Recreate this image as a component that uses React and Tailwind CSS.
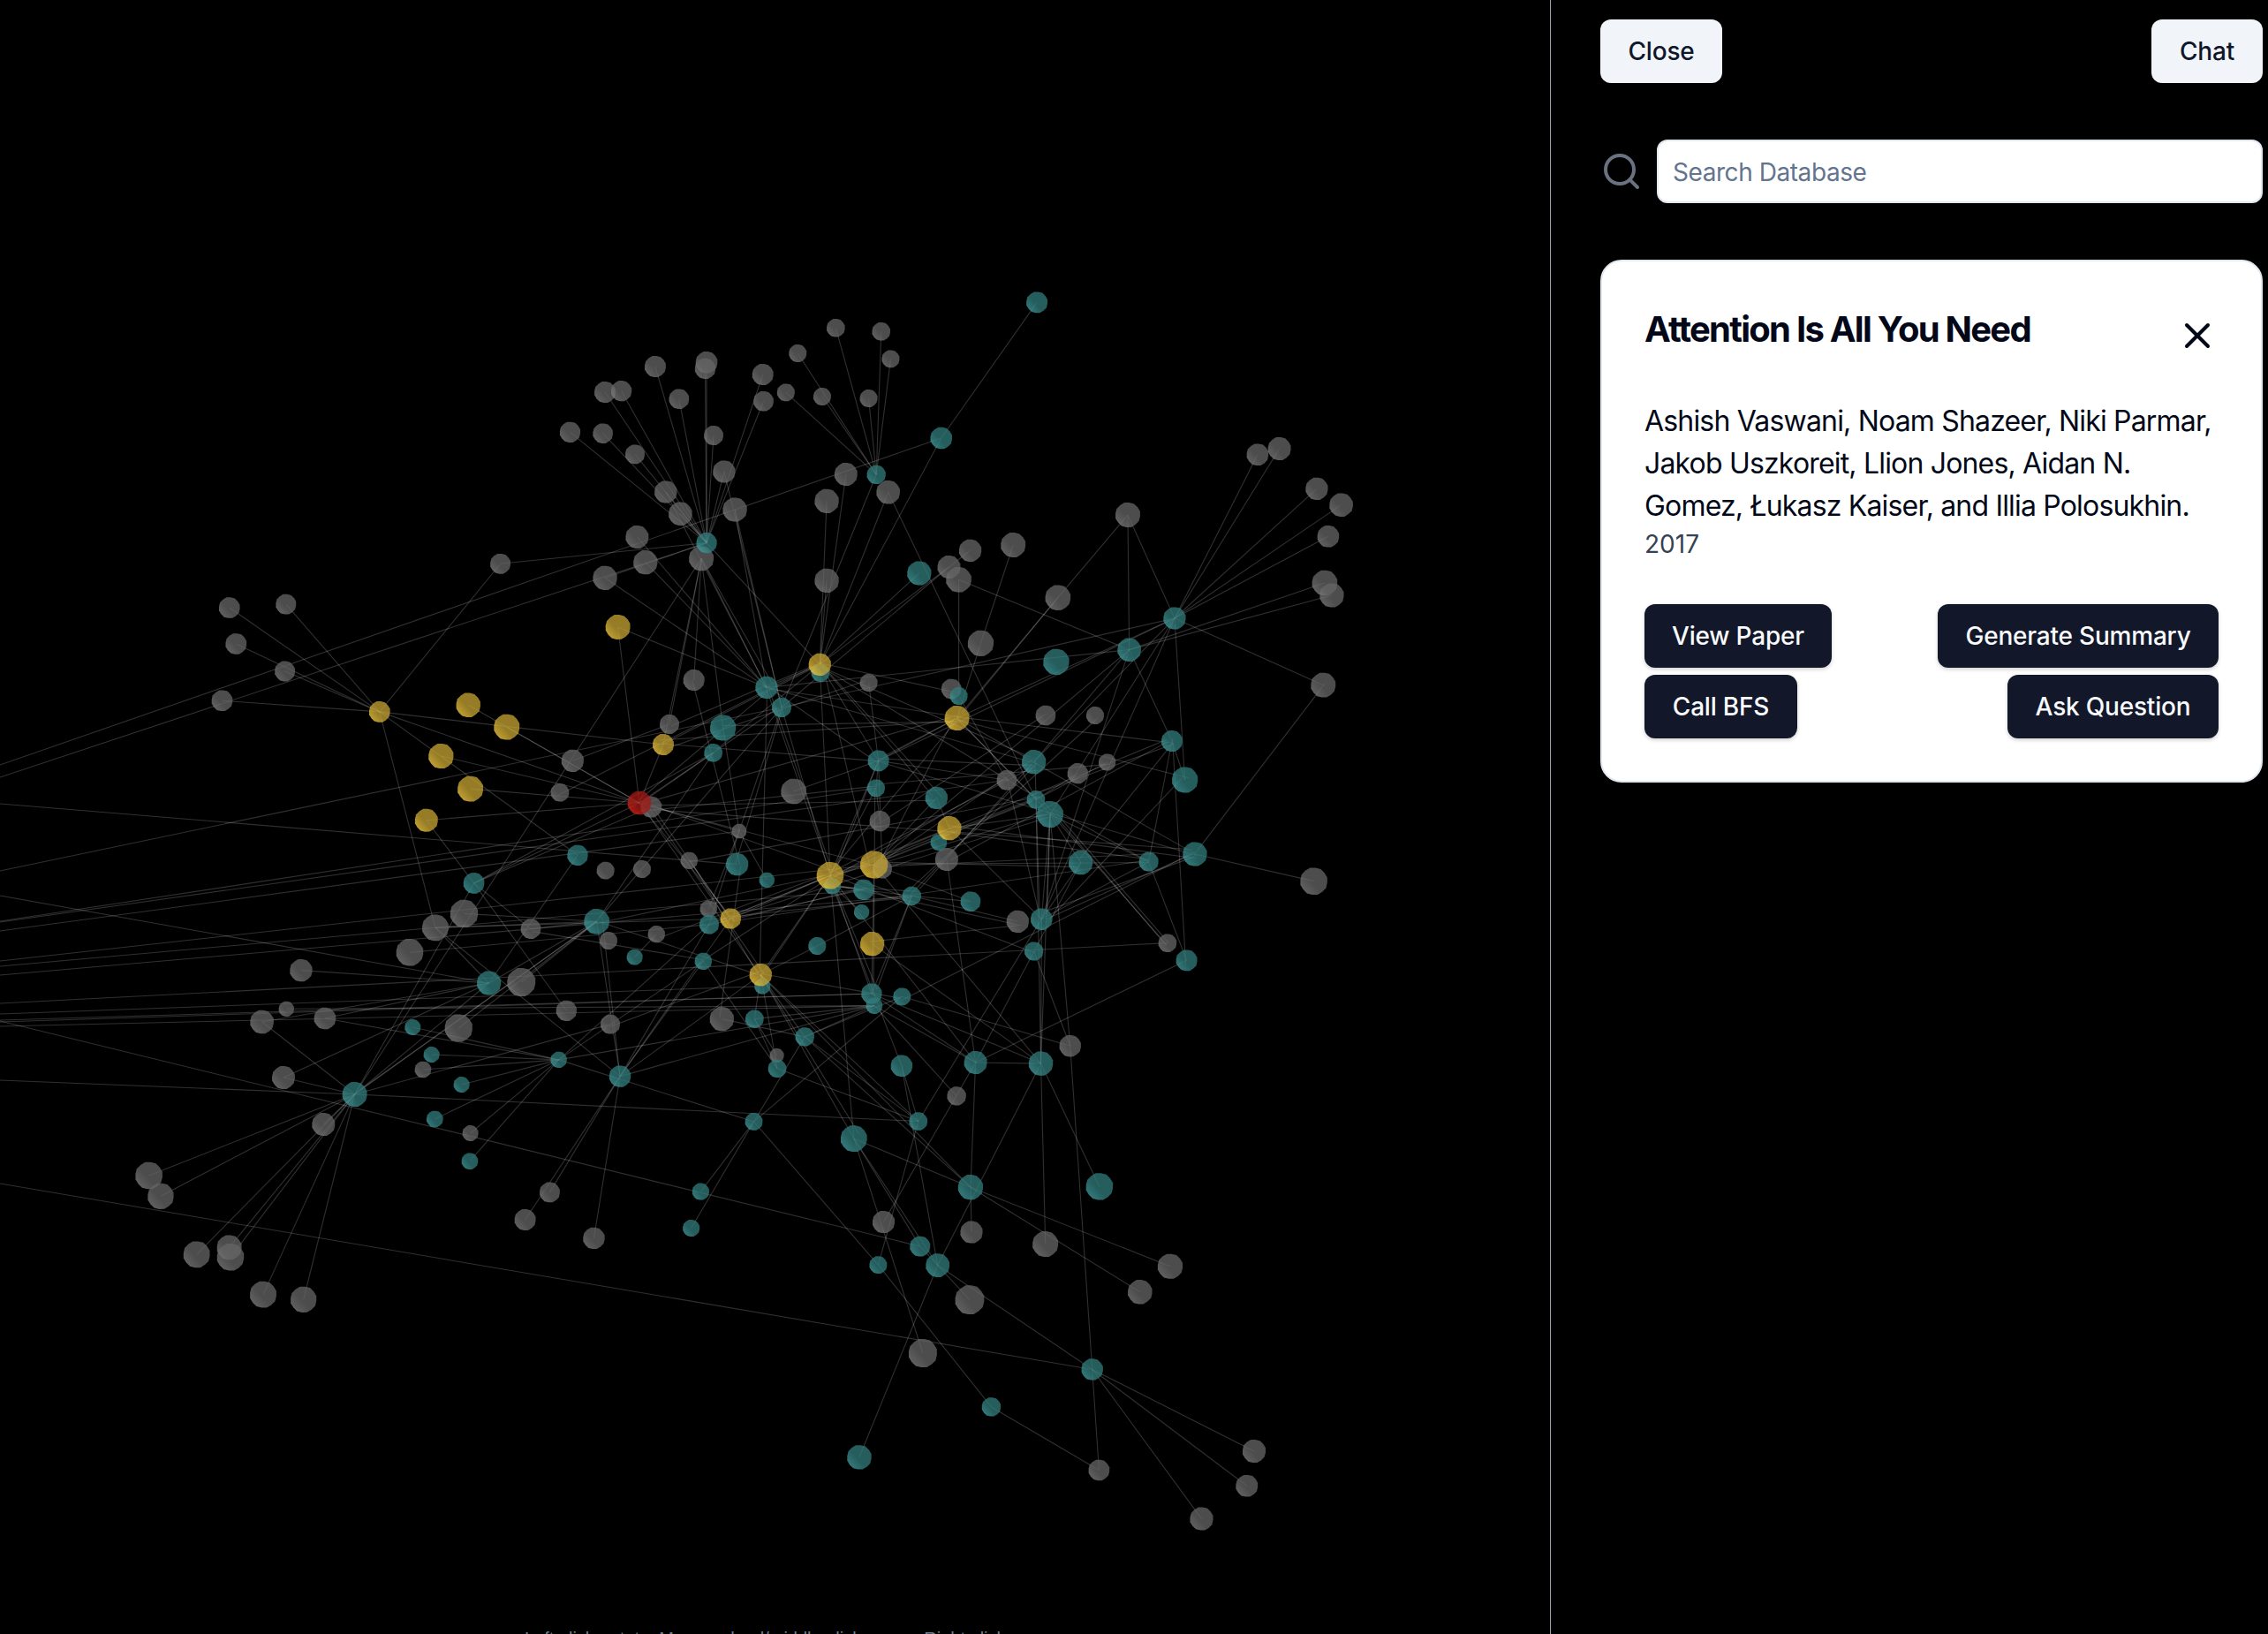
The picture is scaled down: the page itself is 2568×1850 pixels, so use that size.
import React from "react";
import { Search, X } from "lucide-react";

// Node regions: origin (x, y), scale (x, y) and rows of [x, y, radius, kind].
// A radius of 0 is a bare anchor for links.
const REGIONS = {
  a: {
    at: [600, 330], scale: [0.3954, 0.3333],
    nodes: [
      [1452, 37, 36, "t"], [876, 124, 31, "g"], [1006, 136, 31, "g"], [767, 210, 30, "g"], [1033, 229, 30, "g"],
      [359, 255, 36, "g"], [506, 241, 37, "g"], [502, 262, 35, "g"], [667, 282, 36, "g"], [669, 373, 34, "g"],
      [733, 343, 30, "g"], [837, 357, 30, "g"], [970, 363, 30, "g"], [215, 342, 36, "g"], [262, 338, 35, "g"],
      [427, 365, 34, "g"], [115, 478, 35, "g"], [209, 482, 34, "g"], [301, 553, 33, "g"], [526, 489, 33, "g"],
      [1178, 498, 37, "t"], [556, 612, 38, "g"], [905, 621, 39, "g"], [992, 622, 32, "t"], [1026, 682, 40, "g"],
      [389, 681, 38, "g"], [431, 755, 40, "g"], [587, 741, 41, "g"], [850, 712, 41, "g"], [307, 834, 39, "g"],
      [506, 854, 35, "t"], [491, 907, 42, "g"], [331, 920, 41, "g"], [215, 973, 41, "g"], [252, 1140, 42, "y"],
      [850, 982, 41, "g"], [1115, 957, 41, "t"], [1261, 880, 38, "g"], [1384, 861, 42, "g"], [1200, 936, 39, "g"],
      [1228, 979, 43, "g"], [1512, 1040, 43, "g"], [1291, 1195, 44, "g"],
    ],
  },
  b: {
    at: [600, 750], scale: [0.3333, 0.3333],
    nodes: [
      [557, 60, 36, "g"], [804, 85, 38, "t"], [855, 153, 33, "t"], [985, 7, 38, "y"], [987, 35, 31, "t"],
      [1151, 69, 30, "g"], [1432, 90, 34, "g"], [1457, 114, 30, "t"], [1451, 189, 42, "y"], [474, 210, 33, "g"],
      [453, 279, 36, "y"], [656, 222, 44, "t"], [623, 307, 31, "t"], [1184, 334, 36, "t"], [1176, 427, 30, "t"],
      [145, 334, 38, "g"], [102, 442, 31, "g"], [372, 477, 40, "r"], [412, 491, 36, "g"], [896, 438, 43, "g"],
      [711, 573, 25, "g"], [1189, 539, 35, "g"], [1381, 460, 38, "t"], [1425, 563, 41, "y"], [1389, 611, 28, "t"],
      [1416, 669, 39, "g"], [162, 655, 35, "t"], [257, 707, 30, "g"], [381, 702, 30, "g"], [541, 673, 29, "g"],
      [704, 686, 38, "t"], [805, 739, 26, "t"], [1020, 724, 46, "y"], [1028, 760, 28, "t"], [1169, 687, 47, "y"],
      [1197, 701, 33, "g"], [1134, 772, 35, "t"], [1127, 848, 26, "t"], [1297, 793, 32, "t"], [1497, 812, 34, "t"],
      [607, 837, 29, "g"], [609, 890, 33, "t"], [682, 870, 35, "y"], [227, 880, 43, "t"], [267, 945, 30, "g"],
      [430, 923, 29, "g"], [356, 1001, 27, "t"], [589, 1015, 29, "t"], [976, 963, 30, "t"], [1163, 956, 41, "y"],
      [784, 1061, 38, "y"], [790, 1100, 27, "t"], [1161, 1125, 35, "t"], [1170, 1166, 28, "t"], [1264, 1135, 30, "t"],
      [124, 1183, 35, "g"], [273, 1229, 33, "g"], [652, 1211, 41, "g"], [763, 1211, 31, "t"], [3, 905, 34, "g"],
    ],
  },
  c: {
    at: [1000, 750], scale: [0.3333, 0.3333],
    nodes: [
      [588, -2, 44, "t"], [552, 180, 34, "g"], [720, 180, 30, "g"], [981, 267, 36, "t"], [512, 338, 41, "t"],
      [420, 400, 34, "g"], [661, 377, 35, "g"], [761, 339, 29, "g"], [1025, 399, 44, "t"], [519, 466, 31, "t"],
      [567, 516, 45, "t"], [671, 680, 41, "t"], [902, 677, 33, "t"], [1059, 651, 41, "t"], [1495, 77, 42, "g"],
      [1463, 743, 46, "g"], [297, 812, 0, "t"], [457, 880, 38, "g"], [538, 872, 37, "t"], [512, 981, 32, "t"],
      [966, 953, 31, "g"], [1031, 1012, 36, "t"],
    ],
  },
  d: {
    at: [100, 1050], scale: [0.3333, 0.3333],
    nodes: [
      [1179, 1, 45, "g"], [1092, 85, 46, "g"], [723, 146, 38, "g"], [673, 277, 26, "g"], [590, 321, 40, "g"],
      [804, 309, 37, "g"], [1361, 189, 41, "t"], [1471, 186, 48, "g"], [1102, 339, 27, "t"], [1258, 342, 47, "g"],
      [1166, 432, 27, "t"], [1137, 483, 28, "g"], [1268, 534, 27, "t"], [663, 510, 39, "g"], [905, 567, 42, "t"],
      [799, 669, 39, "g"], [1177, 651, 28, "t"], [1298, 699, 27, "g"], [1296, 794, 28, "t"], [206, 843, 46, "g"],
      [246, 913, 44, "g"], [368, 1111, 45, "g"], [479, 1087, 42, "g"], [483, 1120, 46, "g"], [594, 1247, 45, "g"],
      [731, 1264, 44, "g"], [1484, 993, 36, "g"],
    ],
  },
  e: {
    at: [600, 1100], scale: [0.5102, 0.3827],
    nodes: [
      [498, 140, 0, "t"], [610, 193, 28, "t"], [548, 248, 21, "g"], [549, 287, 27, "t"], [825, 279, 32, "t"],
      [989, 269, 34, "t"], [1134, 272, 36, "t"], [1199, 220, 32, "g"], [947, 368, 28, "g"], [64, 261, 24, "t"],
      [200, 310, 32, "t"], [497, 444, 26, "t"], [719, 494, 39, "t"], [862, 443, 27, "t"], [978, 638, 37, "t"],
      [1264, 636, 40, "t"], [44, 653, 30, "g"], [142, 789, 32, "g"], [379, 651, 25, "t"], [358, 759, 25, "t"],
      [785, 741, 33, "g"], [980, 771, 33, "g"], [1144, 806, 38, "g"], [1421, 872, 37, "g"], [1354, 948, 36, "g"],
      [866, 813, 30, "t"], [773, 868, 26, "t"], [905, 869, 35, "t"], [976, 971, 43, "g"], [872, 1129, 42, "g"],
      [1248, 1177, 32, "t"], [1024, 1288, 28, "t"], [731, 1437, 36, "t"], [1263, 1475, 31, "g"],
    ],
  },
  f: {
    at: [0, 600], scale: [0.3954, 0.3827],
    nodes: [
      [1433, 100, 30, "g"], [657, 230, 31, "g"], [819, 220, 30, "g"], [676, 337, 31, "g"], [816, 418, 30, "g"],
      [636, 505, 31, "g"], [1087, 538, 31, "y"], [1341, 518, 36, "y"], [1451, 583, 38, "y"], [1263, 669, 37, "y"],
      [1347, 766, 38, "y"], [1221, 859, 34, "y"], [1357, 1045, 31, "t"], [1329, 1135, 41, "g"],
    ],
  },
  g: {
    at: [0, 0], scale: [1.6378, 1.6372],
    nodes: [[867, 1003.5, 8, "g"], [862, 1027.5, 7.6, "g"], [830.7, 1050.3, 8, "g"]],
  },
  h: {
    at: [1040, 480], scale: [0.3333, 0.3333],
    nodes: [
      [711, 309, 42, "g"], [1152, 104, 37, "g"], [1226, 84, 39, "g"], [1353, 220, 38, "g"], [1436, 275, 40, "g"],
      [1392, 382, 37, "g"], [1380, 540, 43, "g"], [1404, 582, 41, "g"], [870, 660, 38, "t"], [716, 767, 40, "t"],
    ],
  },
};

// Each row lists a hub followed by everything it links to.
const LINKS = `
a30 a5 a6 a7 a8 a9 a13 a14 a15 a16 a17 a18 a19 a21 a25 a26 f0 a33 b3
a23 a1 a2 a3 a4 a10 a11 a12 b2
a20 a0 b3
b3 a22 a24 a28 a35 a36 a39 b13 b22 b22 b34 b32 b6 b10 b12 b16 c9 c4 b9 b1
a24 c9
a40 h9 b7
a37 a39
a38 a42
a42 b8
a41 h0 b8 b8
a39 b2
h8 h0 h1 h2 h3 h4 h5 c14 b2 b8 b13 c8 c10 c4 c18
h9 h0 h6 h7 b1 c4 c3 c18 b34
f6 f0 f1 f2 f3 f4 f5 d0 b10 b17 b26
b17 f7 f8 f9 f10 f11 a34 b10 b12 b1 b2 b8 b42 b50 b20 b38 f12
f12 f11 b12 b18 b59 b55 d14
a31 d14 b9 b0 b1 b10 b11 b1
b1 a29 a32 a33 a34 a25 a27 b32 b32 b13 b8 b50 c4
b2 a27 a21 b32 b20 b30 b43
b11 b20 b8
b0 b30
b18 b22 b50 c13 b34
b8 b10 c3 c8 c4 c9 c10 b34 b32 b13 b13
b13 b14 b32 b32 b35 c4 c10 c5 b19 b10 b5
b14 b32 b21 b18 b52
b5 b10
b15 b9
b34 b52 c4 c9 c10 c11 c12 b32 e6 b22 c12 c16
b23 b22 c10 c13 c18 b32
b32 b42 b42 b41 b45 b50 b50 b52 b52 e5 c19 c3 c4 b43
b33 e4 c17 b38 b38 b37 b36
b38 b52 b52 c4 c16 b48 c17 b42
b42 c10 b36 b29 b18
b43 b59 d14 d14 d7 d9 d6 e10 b50 f13 d0 b12
b41 b36 d1 b20 e9
b29 b50 c9
b49 c17 e6
b50 b51 e3 e13 e14 b54 e1 e12 e12 b48 e10
b56 d14 b50
b57 b30
b58 b53 b50 e2
b20 b40 b31
b47 b32 e9 b59
b46 b45
c3 c9 c12 c8 c21 b25 c11
c13 c14 c15 c4 c10 b54 c18 c18
c12 c10 c10 b23 c18 c21 b42
c8 c18
c10 c18 c18 e6 e7 c20 c11
c20 c10 c9
c11 c18 e5
c5 c18 b32 b7
c6 c9
c7 c9 b14
c1 b21
c2 b38
c9 e6 b32 b34
c4 c18 b38
c18 e6
c21 e5
e7 e30 b54 c19
e5 e6 e14 e20 b53 b52 b25
e6 e15 e22 e27 b52
e14 e21 e23 e24 e12 e1
e12 e29 e25 e27 b32
e25 e28
e27 e30 e32 e4
e4 e13
e13 e26 e3 e1 d14 c18
e8 b53
e11 e18 e19 e26 e9 e1 b54
e26 e31
e33 e31 e30
e30 g0 g1 g2
e10 e16 d26 e17 b53 b47 b41 b42 b43
e1 b53 b54 b57
e3 b58 b47
e9 d5 d8 d10 d11 d12 d16 d17 d18 b53
d6 d0 d2 d4 d5 d13 d14 b26
d0 e10 b42
d14 d4 d13 d15 d19 d20 d21 d22 d23 d24 d25
d3 b53
`;

// Links that leave the canvas on the left: y at x = 0, then the target node.
const OFFSCREEN = [
  [866, "a20"], [880, "a30"], [910, "b30"], [986, "b2"], [1043, "b14"], [1044, "c5"], [1054, "b20"],
  [1014, "d6"], [1088, "b34"], [1094, "b36"], [1104, "b38"], [1136, "c20"], [1148, "b51"], [1155, "b52"],
  [1157, "b52"], [1162, "b53"], [1156, "e25"], [1223, "d14"], [1340, "e30"],
];

const nodes = new Map();
for (const [key, { at, scale, nodes: rows }] of Object.entries(REGIONS)) {
  rows.forEach(([x, y, r, kind], i) => {
    nodes.set(key + i, { x: at[0] + x * scale[0], y: at[1] + y * scale[1], r: r * scale[1], kind });
  });
}

// A second link between the same pair is fanned out slightly at its far end,
// and long links in the dense middle do not meet exactly at the node centre.
const seen = new Map();
const edges = LINKS.trim().split("\n").flatMap((row, n) => {
  const [hub, ...rest] = row.trim().split(/\s+/);
  return rest.map((id, i) => {
    const key = [hub, id].sort().join("-");
    const twin = seen.get(key) || 0;
    seen.set(key, twin + 1);
    const p = nodes.get(hub);
    const q = nodes.get(id);
    const long = Math.hypot(p.x - q.x, p.y - q.y) > 150 && "bc".includes(hub[0]) && "bc".includes(id[0]);
    const dx = long ? ((n * 7 + i * 5) % 11) - 5 : 0;
    const dy = long ? ((n * 3 + i * 7) % 11) - 5 : 0;
    return { x1: p.x - dx * 0.6, y1: p.y - dy * 0.6, x2: q.x + dx + twin * 6, y2: q.y + dy - twin * 5 };
  });
});

const PAINT = {
  g: ["#808080", "#656565"],
  t: ["#44a0a2", "#317b7b"],
  y: ["#ffd342", "#c5a332"],
  r: ["#e0261a", "#a31813"],
};
const LAYER = { g: 0, t: 1, y: 2, r: 3 };
const spheres = [...nodes].filter(([, n]) => n.r > 0).sort((m, n) => LAYER[m[1].kind] - LAYER[n[1].kind]);

// Low-poly sphere outline, slightly rotated.
function outline({ x, y, r }) {
  return Array.from({ length: 16 }, (_, i) => {
    const t = (i / 16) * Math.PI * 2 + 0.12;
    const k = i % 2 ? 1.03 : 1;
    return `${(x + Math.cos(t) * r * k).toFixed(1)},${(y + Math.sin(t) * r * k).toFixed(1)}`;
  }).join(" ");
}

function Graph() {
  return (
    <svg className="block h-full w-full" viewBox="0 0 1755 1850" preserveAspectRatio="xMinYMin slice">
      <defs>
        {Object.entries(PAINT).map(([k, [light, base]]) => (
          <linearGradient key={k} id={"paint-" + k} x1="0.1" y1="0.85" x2="0.9" y2="0.15">
            <stop offset="0" stopColor={light} />
            <stop offset="0.42" stopColor={base} />
          </linearGradient>
        ))}
      </defs>
      <g stroke="#fff" strokeOpacity="0.19" strokeWidth="1.1">
        {edges.map((line, i) => (
          <line key={i} {...line} />
        ))}
        {OFFSCREEN.map(([y, id], i) => (
          <line key={i} x1="0" y1={y} x2={nodes.get(id).x} y2={nodes.get(id).y} />
        ))}
      </g>
      <g fillOpacity="0.76">
        {spheres.map(([id, n]) => (
          <polygon key={id} points={outline(n)} fill={`url(#paint-${n.kind})`} />
        ))}
      </g>
    </svg>
  );
}

function Button({ light, className = "", children }) {
  const tone = light
    ? "bg-slate-100 text-slate-900"
    : "bg-[#12172a] text-slate-50 shadow-[0_2px_4px_rgba(0,0,0,0.18)]";
  return (
    <button className={`flex h-[72px] items-center justify-center whitespace-nowrap rounded-xl text-[28px] font-medium tracking-[-0.2px] ${tone} ${className}`}>
      {children}
    </button>
  );
}

export default function App() {
  return (
    <div className="flex h-screen w-full overflow-hidden bg-black font-['Inter',sans-serif]">
      <main className="relative w-[1756px] shrink-0 overflow-hidden border-r border-gray-400">
        <Graph />
        <div className="absolute inset-x-0 top-[1844px] pl-[22px] text-center font-['Liberation_Sans',sans-serif] text-[20px] leading-[23px] text-[slategrey]">
          Left-click: rotate, Mouse-wheel/middle-click: zoom, Right-click: pan
        </div>
      </main>

      <aside className="flex min-w-0 flex-1 flex-col gap-16 pl-14 pr-1.5 pt-[22px]">
        <div className="flex justify-between">
          <Button light className="w-[138px]">Close</Button>
          <Button light className="w-[126px]">Chat</Button>
        </div>

        <div className="flex items-center gap-4">
          <Search size={48} className="shrink-0 text-gray-500" />
          <input
            className="h-[72px] min-w-0 flex-1 rounded-xl border-2 border-slate-200 bg-white px-4 pt-0.5 text-[28px] tracking-[-0.44px] placeholder:text-slate-500"
            placeholder="Search Database"
          />
        </div>

        <section className="rounded-3xl border-2 border-slate-200 bg-white p-12 text-[#020817]">
          <div className="flex h-[60px] items-start justify-between">
            <h3 className="mt-px whitespace-nowrap text-[40px] font-bold leading-[56px] tracking-[-1.75px]">Attention Is All You Need</h3>
            <X size={48} className="mt-3 shrink-0" />
          </div>
          <p className="mt-[49px] whitespace-nowrap text-[32px] leading-[48px] tracking-[-0.82px]">
            Ashish Vaswani, Noam Shazeer, Niki Parmar,
            <br />
            Jakob Uszkoreit, Llion Jones, Aidan N.
            <br />
            Gomez, Łukasz Kaiser, and Illia Polosukhin.
          </p>
          <p className="-mt-px text-[28px] leading-10 text-gray-700">2017</p>
          <div className="mt-12 flex flex-col gap-2">
            <div className="flex justify-between">
              <Button className="w-[212px]">View Paper</Button>
              <Button className="w-[318px]">Generate Summary</Button>
            </div>
            <div className="flex justify-between">
              <Button className="w-[173px]">Call BFS</Button>
              <Button className="w-[239px]">Ask Question</Button>
            </div>
          </div>
        </section>
      </aside>
    </div>
  );
}
